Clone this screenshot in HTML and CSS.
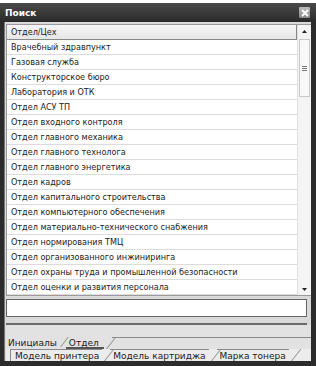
FILE: index.html
```html
<!DOCTYPE html>
<html lang="ru">
<head>
    <meta charset="UTF-8">
    <title>Поиск</title>
    <link rel="stylesheet" href="styles.css">
</head>
<body>
    <div class="window">
        <div class="titlebar">
            <span class="title">Поиск</span>
            <span class="close">
                <svg width="8" height="8" viewBox="0 0 8 8"><path d="M1 1L7 7M7 1L1 7" stroke="#fff" stroke-width="2"/></svg>
            </span>
        </div>
        <div class="content">
            <div class="list">
                <div class="rows">
                    <div class="head">Отдел/Цех</div>
                    <div class="row">Врачебный здравпункт</div>
                    <div class="row">Газовая служба</div>
                    <div class="row">Конструкторское бюро</div>
                    <div class="row">Лаборатория и ОТК</div>
                    <div class="row">Отдел АСУ ТП</div>
                    <div class="row">Отдел входного контроля</div>
                    <div class="row">Отдел главного механика</div>
                    <div class="row">Отдел главного технолога</div>
                    <div class="row">Отдел главного энергетика</div>
                    <div class="row">Отдел кадров</div>
                    <div class="row">Отдел капитального строительства</div>
                    <div class="row">Отдел компьютерного обеспечения</div>
                    <div class="row">Отдел материально-технического снабжения</div>
                    <div class="row">Отдел нормирования ТМЦ</div>
                    <div class="row">Отдел организованного инжиниринга</div>
                    <div class="row">Отдел охраны труда и промышленной безопасности</div>
                    <div class="row">Отдел оценки и развития персонала</div>
                </div>
                <div class="scrollbar">
                    <div class="arrow">
                        <svg width="5" height="3" viewBox="0 0 5 3"><path d="M0 3L2.5 0L5 3Z" fill="#222"/></svg>
                    </div>
                    <div class="track">
                        <div class="thumb"><span class="grip"></span></div>
                    </div>
                    <div class="arrow">
                        <svg width="5" height="3" viewBox="0 0 5 3"><path d="M0 0L2.5 3L5 0Z" fill="#222"/></svg>
                    </div>
                </div>
            </div>
            <div class="search">
                <div class="field"></div>
            </div>
            <div class="tabs">
                <div class="tab-row first">
                    <span class="tab active">Инициалы</span>
                    <span class="tab slant current">Отдел</span>
                    <span class="filler slant"></span>
                </div>
                <div class="tab-row second">
                    <span class="tab lead">Модель принтера</span>
                    <span class="tab slant">Модель картриджа</span>
                    <span class="tab slant">Марка тонера</span>
                    <span class="filler slant"></span>
                </div>
            </div>
        </div>
    </div>
</body>
</html>
```
FILE: styles.css
```css
body {
    margin: 0;
    background-color: #fff;
    font-family: 'DejaVu Sans Condensed', 'DejaVu Sans', sans-serif;
    font-size: 9px;
    color: #222;
}

.window {
    margin-top: 3px;
    width: 316px;
    height: 363px;
    box-sizing: border-box;
    background-color: #2c2c2c;
    padding: 0 5px 5px 4px;
    display: flex;
    flex-direction: column;
}

.titlebar {
    height: 19px;
    display: flex;
    align-items: center;
    justify-content: space-between;
    background: linear-gradient(#4a4a4a, #2a2a2a);
    margin: 0 -5px 0 -4px;
    padding: 0 6px 0 5px;
}

.title {
    color: #fff;
    font-family: 'DejaVu Sans', sans-serif;
    font-weight: bold;
    font-size: 9px;
}

.close {
    width: 11px;
    height: 11px;
    display: flex;
    align-items: center;
    justify-content: center;
    background: linear-gradient(#bbb, #888);
    border-radius: 1px;
}

.content {
    flex: 1;
    background-color: #d9d9d9;
    border-left: 1px solid #777;
    padding: 2px 0 0 1px;
    display: flex;
    flex-direction: column;
}

.list {
    display: flex;
    height: 270px;
    background-color: #fff;
    border: 1px solid #9a9a9a;
    border-right: none;
}

.rows {
    flex: 1;
    overflow: hidden;
}

.head {
    height: 14px;
    line-height: 14px;
    padding-left: 4px;
    background: linear-gradient(#f6f6f6, #e6e6e6);
    border-bottom: 1px solid #888;
    border-right: 1px solid #888;
}

.row {
    height: 14px;
    line-height: 14px;
    padding-left: 4px;
    border-bottom: 1px solid #dcdcdc;
    white-space: nowrap;
}

.scrollbar {
    width: 13px;
    display: flex;
    flex-direction: column;
    background-color: #f4f4f4;
    border-left: 1px solid #e0e0e0;
}

.arrow {
    height: 12px;
    display: flex;
    align-items: center;
    justify-content: center;
}

.track {
    flex: 1;
    padding: 0 1px;
}

.thumb {
    margin-top: 2px;
    height: 56px;
    background-color: #f8f8f8;
    border: 1px solid #c8c8c8;
    display: flex;
    align-items: center;
    justify-content: center;
}

.grip {
    width: 5px;
    height: 5px;
    border-top: 1px solid #777;
    border-bottom: 1px solid #777;
    box-sizing: border-box;
    background: linear-gradient(transparent 1px, #777 1px, #777 2px, transparent 2px);
}

.search {
    height: 29px;
    padding-top: 3px;
    border-bottom: 2px solid #6a6a6a;
    margin-right: 4px;
    box-sizing: border-box;
}

.field {
    height: 16px;
    background-color: #fff;
    border: 1px solid #666;
}

.tabs {
    flex: 1;
    display: flex;
    flex-direction: column;
    justify-content: flex-end;
    background-color: #e2e2e2;
    font-family: 'DejaVu Sans', sans-serif;
}

.tab-row {
    display: flex;
    height: 12px;
    line-height: 12px;
}

.tab {
    position: relative;
    padding: 0 3px;
    white-space: nowrap;
}

.slant {
    margin-left: 8px;
}

.slant::before {
    content: '';
    position: absolute;
    left: -6px;
    top: 0;
    bottom: 0;
    width: 1px;
    background-color: #8a8a8a;
    transform: skewX(-38deg);
    transform-origin: bottom;
}

.filler {
    position: relative;
    flex: 1;
    border-top: 1px solid #8a8a8a;
}

.first .active {
    padding-left: 2px;
    padding-right: 1px;
}

.first .current {
    border-bottom: 2px solid #555;
    padding-right: 5px;
}

.first .filler {
    margin-left: 8px;
}

.second {
    background-color: #ececec;
    padding-left: 4px;
}

.second .tab {
    border-top: 1px solid #8a8a8a;
    padding-right: 3px;
}

.second .slant {
    margin-left: 8px;
}

.second .lead {
    border-left: 1px solid #8a8a8a;
    padding-left: 4px;
}

.second .filler {
    margin-right: 22px;
    border-top: none;
}
```
